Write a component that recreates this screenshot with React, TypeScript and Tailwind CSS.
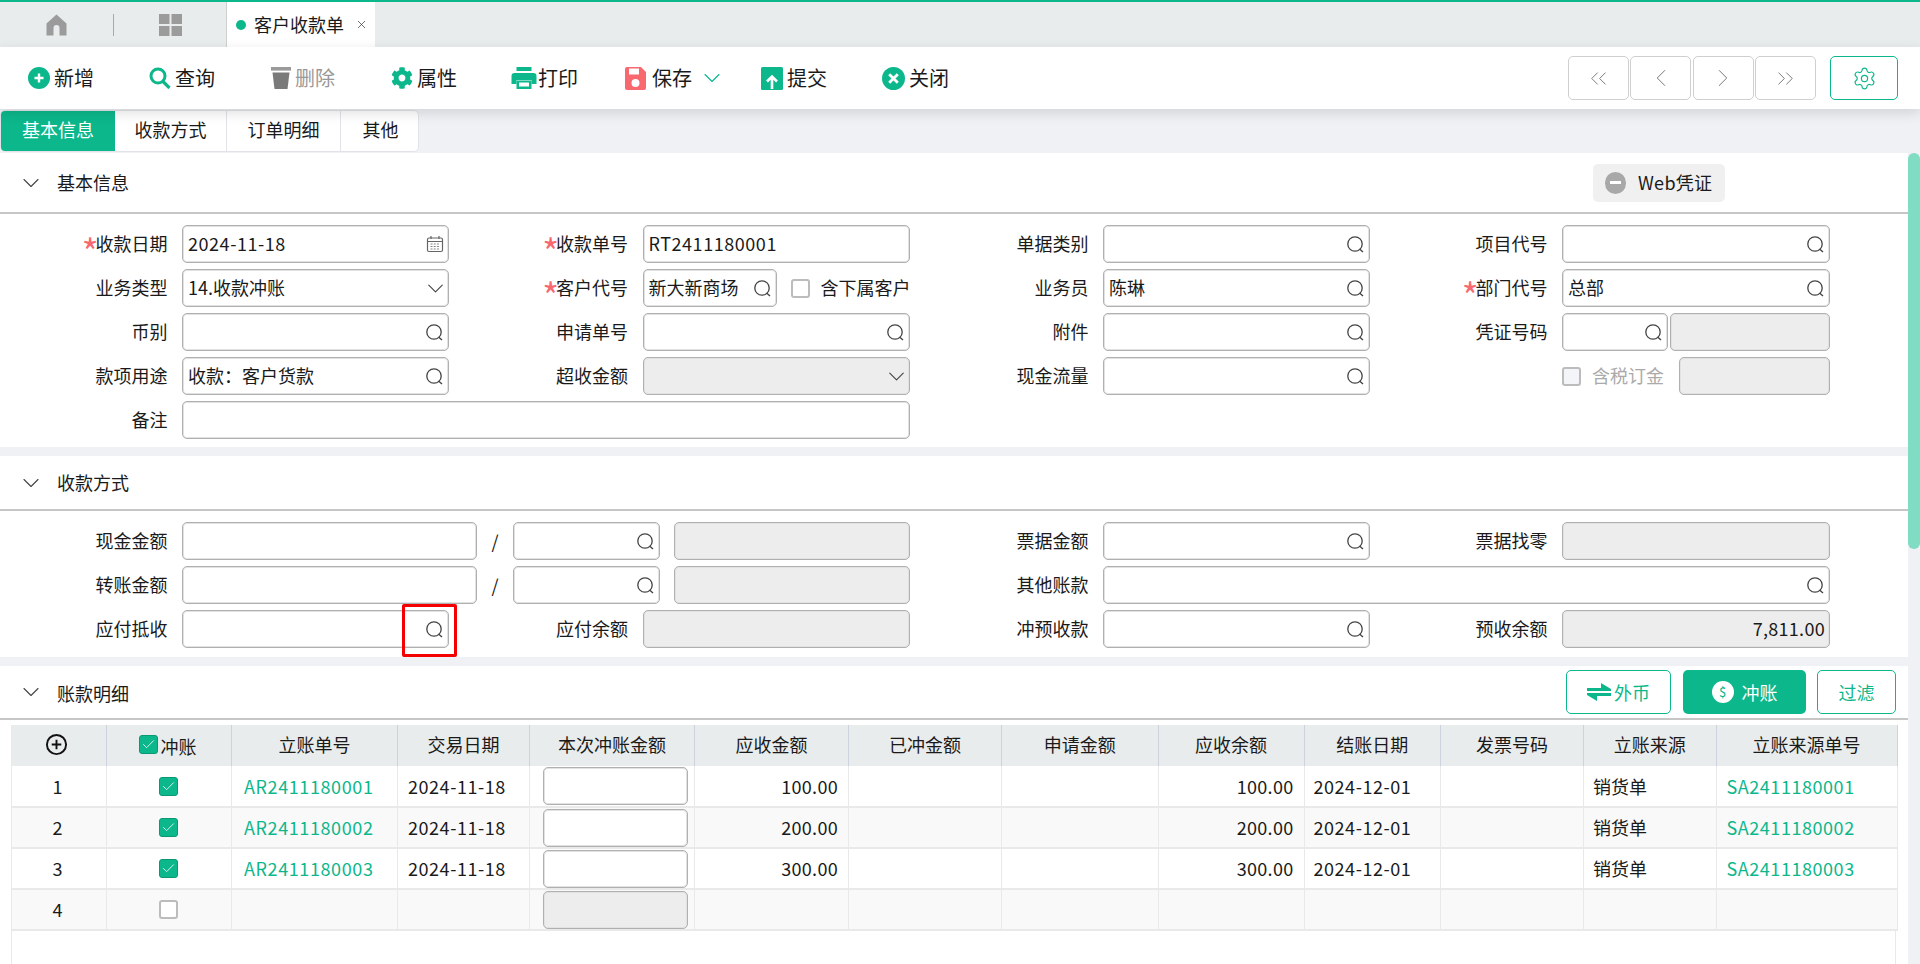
import React from "react";
import { ChevronDown, ChevronLeft, ChevronRight, ChevronsLeft, ChevronsRight, Settings, Check, X } from "lucide-react";
import { FaCog } from "react-icons/fa";

const G = "#0cb78b";

function Q() {
  return (
    <svg width="19" height="19" viewBox="0 0 19 19" fill="none" className="shrink-0">
      <circle cx="9" cy="9" r="7.2" stroke="#444" strokeWidth="1.3" />
      <path d="M13.5 14 L17 17" stroke="#444" strokeWidth="1.4" />
    </svg>
  );
}

function Cal() {
  return (
    <svg width="18" height="18" viewBox="0 0 18 18" fill="none" className="shrink-0">
      <rect x="1.5" y="3" width="15" height="13.5" rx="1.5" stroke="#666" strokeWidth="1.2" />
      <path d="M1.5 6.5 H16.5 M5 1 V4 M13 1 V4" stroke="#666" strokeWidth="1.2" />
      <path d="M4.5 9 H13.5 M4.5 11.5 H13.5 M4.5 14 H13.5" stroke="#888" strokeWidth="1" strokeDasharray="2 1.2" />
    </svg>
  );
}

function Label({ children, req }: { children?: React.ReactNode; req?: boolean }) {
  return (
    <div className="flex items-center justify-end h-[38px] pb-[2px] pr-[1px] text-[18px] text-[#1a1a1a] whitespace-nowrap">
      {req && <span className="text-[#f8686f] text-[36px] leading-[0] mt-[14px] -mr-[3px]">*</span>}
      {children}
    </div>
  );
}

function Inp({
  v,
  icon,
  disabled,
  right,
  className,
  children,
}: {
  v?: string;
  icon?: "q" | "cal" | "down";
  disabled?: boolean;
  right?: boolean;
  className?: string;
  children?: React.ReactNode;
}) {
  return (
    <div
      className={`relative flex items-center h-[38px] rounded-[5px] border border-[#b0b0b0] shadow-[inset_0_0_0_1px_#e2e2e2] pl-[5px] pr-[4px] text-[18px] text-[#1a1a1a] ${
        disabled ? "bg-[#ecedec]" : "bg-white"
      } ${className ?? ""}`}
    >
      <span className={`flex-1 pb-[2px] whitespace-nowrap overflow-hidden ${right ? "text-right" : ""}`}>{v}</span>
      {icon === "q" && <Q />}
      {icon === "cal" && <Cal />}
      {icon === "down" && <ChevronDown size={27} strokeWidth={1} color="#444" className="-mr-[5px] -my-[4px] shrink-0" />}
      {children}
    </div>
  );
}

function Box({ on, disabled, className }: { on?: boolean; disabled?: boolean; className?: string }) {
  return on ? (
    <span className={`inline-flex items-center justify-center w-[19px] h-[19px] rounded-[3px] bg-[#0cb78b] border-[1.5px] border-[#099a75] ${className ?? ""}`}>
      <Check size={15} color="#fff" strokeWidth={1.3} />
    </span>
  ) : (
    <span className={`inline-block w-[19px] h-[19px] rounded-[3px] border-[2px] border-[#bcbcbc] ${disabled ? "bg-[#f4f5f9]" : "bg-white"} ${className ?? ""}`} />
  );
}

function SecHead({ title, className, titleClass, children }: { title: string; className: string; titleClass?: string; children?: React.ReactNode }) {
  return (
    <div className={`flex items-center border-b-2 border-[#c6c6c6] ${className}`}>
      <ChevronDown size={28} strokeWidth={0.95} color="#444" className="ml-[17px] shrink-0" />
      <span className={`ml-[12px] text-[18px] text-[#1a1a1a] ${titleClass ?? ""}`}>{title}</span>
      {children}
    </div>
  );
}

function ToolBtn({ icon, label, className, muted }: { icon: React.ReactNode; label: string; className: string; muted?: boolean }) {
  return (
    <div className={`flex items-center shrink-0 ${className}`}>
      {icon}
      <span className={`ml-[4px] text-[20px] ${muted ? "text-[#999]" : "text-[#1a1a1a]"}`}>{label}</span>
    </div>
  );
}

function NavBtn({ children, className }: { children: React.ReactNode; className?: string }) {
  return (
    <div className={`flex items-center justify-center w-[61px] h-[44px] rounded-[5px] border border-[#cfcfcf] bg-white ${className ?? ""}`}>
      {children}
    </div>
  );
}

const rows = [
  { n: "1", c: true, ar: "AR2411180001", d: "2024-11-18", a: "100.00", e: "2024-12-01", sa: "SA2411180001" },
  { n: "2", c: true, ar: "AR2411180002", d: "2024-11-18", a: "200.00", e: "2024-12-01", sa: "SA2411180002" },
  { n: "3", c: true, ar: "AR2411180003", d: "2024-11-18", a: "300.00", e: "2024-12-01", sa: "SA2411180003" },
  { n: "4", c: false, ar: "", d: "", a: "", e: "", sa: "" },
];

const heads = ["立账单号", "交易日期", "本次冲账金额", "应收金额", "已冲金额", "申请金额", "应收余额", "结账日期", "发票号码", "立账来源", "立账来源单号"];

const th = "h-[41px] p-0 pb-[2px] font-normal text-[18px] text-[#1a1a1a] text-center bg-[#e9ecec] border-r border-[#ccd3de]";
const td = "h-[41px] p-0 text-[18px] border-r border-b-2 border-[#e9e9e9]";
const grid8 = "grid grid-cols-[167.5px_267px_166.5px_267.5px_166px_267px_165px_268px] gap-x-[13.5px] gap-y-[6px] pl-[1px]";

export default function App() {
  return (
    <div className="w-[1920px] h-[964px] overflow-hidden flex flex-col bg-[#f0f1f5] [font-family:'Noto_Sans_CJK_SC','Noto_Sans',sans-serif]">
      {/* tab strip */}
      <div className="h-[47px] shrink-0 bg-[#e9ecec] border-t-2 border-[#0cb78b] flex items-stretch">
        <div className="w-[113px] flex items-center pl-[46px]">
          <svg width="21" height="22" viewBox="0 0 21 22">
            <path d="M10.5 0.5 L20.5 9.5 V21.5 H13.5 V14 A3 3 0 0 0 7.5 14 V21.5 H0.5 V9.5 Z" fill="#9b9b9b" />
          </svg>
        </div>
        <div className="w-px h-[22px] self-center bg-[#aaa]" />
        <div className="w-[112px] flex items-center pl-[45px]">
          <svg width="23" height="22" viewBox="0 0 23 22" fill="#9b9b9b">
            <rect width="10.5" height="10" x="0" y="0" />
            <rect width="10.5" height="10" x="12.5" y="0" />
            <rect width="10.5" height="10" x="0" y="12" />
            <rect width="10.5" height="10" x="12.5" y="12" />
          </svg>
        </div>
        <div className="w-[149px] bg-white border-l border-[#cfcfcf] flex items-center pl-[9px]">
          <span className="w-[10px] h-[10px] rounded-full bg-[#0cb78b]" />
          <span className="ml-[8px] text-[18px] text-[#1a1a1a]">客户收款单</span>
          <X size={13} strokeWidth={1.3} color="#333" className="ml-[11px]" />
        </div>
      </div>

      {/* toolbar */}
      <div className="relative z-10 h-[62px] shrink-0 bg-white flex items-center pl-[28px] pr-[22px] shadow-[0_4px_12px_rgba(0,0,0,0.13)]">
        <ToolBtn
          className="w-[121px]"
          label="新增"
          icon={
            <svg width="22" height="22" viewBox="0 0 22 22">
              <circle cx="11" cy="11" r="11" fill={G} />
              <path d="M11 6.5 V15.5 M6.5 11 H15.5" stroke="#fff" strokeWidth="2.4" />
            </svg>
          }
        />
        <ToolBtn
          className="w-[122px]"
          label="查询"
          icon={
            <svg width="22" height="22" viewBox="0 0 22 22" fill="none">
              <circle cx="9" cy="9" r="7" stroke={G} strokeWidth="3" />
              <path d="M13.5 14 L20.5 21" stroke={G} strokeWidth="3.2" />
            </svg>
          }
        />
        <ToolBtn
          className="w-[120px]"
          label="删除"
          muted
          icon={
            <svg width="20" height="22" viewBox="0 0 20 22" fill="#7a7a7a">
              <rect x="0" y="0" width="20" height="3.6" fill="#9a9a9a" />
              <path d="M1.5 5.5 H18.5 L16.5 22 H3.5 Z" />
            </svg>
          }
        />
        <ToolBtn className="w-[120px]" label="属性" icon={<FaCog size={22} color={G} />} />
        <div className="w-[114px] flex items-center shrink-0">
          <svg width="26" height="22" viewBox="0 0 25 22" fill={G}>
            <rect x="5" y="0" width="15" height="4" />
            <path d="M3 6 H22 A3 3 0 0 1 25 9 V17 H20 V13 H5 V17 H0 V9 A3 3 0 0 1 3 6 Z" />
            <path d="M5 13.5 H20 V22 H5 Z M7.5 15.5 V19.5 H17.5 V15.5 Z" fillRule="evenodd" />
          </svg>
          <span className="ml-[1px] text-[20px] text-[#1a1a1a]">打印</span>
        </div>
        <div className="w-[136px] flex items-center shrink-0">
          <svg width="21" height="23" viewBox="0 0 21 23" fill="#f8686f">
            <path fillRule="evenodd" d="M2 0 H16 L21 5 V21 A2 2 0 0 1 19 23 H2 A2 2 0 0 1 0 21 V2 A2 2 0 0 1 2 0 Z M4 1.5 V7.5 H14 V1.5 Z M10.5 12 A4 4 0 1 0 10.5 20 A4 4 0 1 0 10.5 12 Z" />
          </svg>
          <span className="ml-[6px] text-[20px] text-[#1a1a1a]">保存</span>
          <ChevronDown size={28} strokeWidth={0.95} color={G} className="ml-[6px] -my-[4px] shrink-0" />
        </div>
        <ToolBtn
          className="w-[121px]"
          label="提交"
          icon={
            <svg width="22" height="23" viewBox="0 0 22 23">
              <rect width="22" height="23" rx="1.5" fill={G} />
              <path d="M11 22 V11 M6 14.5 L11 9.5 L16 14.5" stroke="#fff" strokeWidth="2.6" fill="none" />
            </svg>
          }
        />
        <ToolBtn
          className="w-[121px]"
          label="关闭"
          icon={
            <svg width="23" height="23" viewBox="0 0 23 23">
              <circle cx="11.5" cy="11.5" r="11.5" fill={G} />
              <path d="M7.2 7.2 L15.8 15.8 M15.8 7.2 L7.2 15.8" stroke="#fff" strokeWidth="2.8" />
            </svg>
          }
        />
        <div className="ml-auto flex items-center">
          <NavBtn><ChevronsLeft size={27} strokeWidth={0.85} color="#777" /></NavBtn>
          <NavBtn className="ml-[1.5px]"><ChevronLeft size={30} strokeWidth={0.8} color="#777" /></NavBtn>
          <NavBtn className="ml-[1.5px]"><ChevronRight size={30} strokeWidth={0.8} color="#777" /></NavBtn>
          <NavBtn className="ml-[1.5px]"><ChevronsRight size={27} strokeWidth={0.85} color="#777" /></NavBtn>
          <div className="ml-[14px] w-[68px] h-[44px] rounded-[5px] border border-[#0cb78b] flex items-center justify-center">
            <Settings size={25} strokeWidth={1.1} color={G} />
          </div>
        </div>
      </div>

      {/* page tabs */}
      <div className="h-[44px] shrink-0 pt-[1px]">
        <div className="flex w-[419px] h-[42px] rounded-[5px] bg-white border border-[#e2e3e8] text-[18px] text-[#1a1a1a] overflow-hidden">
          <div className="w-[114px] pb-[3px] flex items-center justify-center bg-[#0cb78b] text-white">基本信息</div>
          <div className="w-[112px] pb-[3px] flex items-center justify-center border-r border-[#e2e3e8]">收款方式</div>
          <div className="w-[114px] pb-[3px] flex items-center justify-center border-r border-[#e2e3e8]">订单明细</div>
          <div className="flex-1 pb-[3px] pl-[2px] flex items-center justify-center">其他</div>
        </div>
      </div>

      {/* scrolling body */}
      <div className="flex flex-1 min-h-0">
        <div className="w-[1908px] flex flex-col">
          {/* section 1 */}
          <div className="bg-white">
            <SecHead title="基本信息" className="h-[61px]">
              <div className="ml-auto mr-[183px] w-[132px] h-[38px] rounded-[5px] bg-[#f0f0f0] flex items-center pl-[12px]">
                <span className="w-[21px] h-[22px] rounded-full bg-[#a8a8a8] flex items-center justify-center">
                  <span className="w-[11px] h-[3px] bg-white" />
                </span>
                <span className="ml-[12px] text-[18px] tracking-[0.3px] text-[#1a1a1a]">Web凭证</span>
              </div>
            </SecHead>
            <div className={`${grid8} pt-[11px] pb-[8px]`}>
              <Label req>收款日期</Label>
              <Inp v="2024-11-18" icon="cal" className="tracking-[0.55px]" />
              <Label req>收款单号</Label>
              <Inp v="RT2411180001" className="tracking-[0.55px]" />
              <Label>单据类别</Label>
              <Inp icon="q" />
              <Label>项目代号</Label>
              <Inp icon="q" />

              <Label>业务类型</Label>
              <Inp v="14.收款冲账" icon="down" />
              <Label req>客户代号</Label>
              <div className="flex items-center">
                <Inp v="新大新商场" icon="q" className="w-[134px] shrink-0" />
                <Box className="ml-[14px] shrink-0" />
                <span className="ml-[11px] pb-[2px] text-[18px] text-[#1a1a1a] whitespace-nowrap">含下属客户</span>
              </div>
              <Label>业务员</Label>
              <Inp v="陈琳" icon="q" />
              <Label req>部门代号</Label>
              <Inp v="总部" icon="q" />

              <Label>币别</Label>
              <Inp icon="q" />
              <Label>申请单号</Label>
              <Inp icon="q" />
              <Label>附件</Label>
              <Inp icon="q" />
              <Label>凭证号码</Label>
              <div className="flex items-center gap-[1.5px]">
                <Inp icon="q" className="w-[106px] shrink-0" />
                <Inp disabled className="flex-1" />
              </div>

              <Label>款项用途</Label>
              <Inp v="收款：客户货款" icon="q" />
              <Label>超收金额</Label>
              <Inp disabled icon="down" />
              <Label>现金流量</Label>
              <Inp icon="q" />
              <Label />
              <div className="flex items-center">
                <Box disabled className="shrink-0" />
                <span className="ml-[11px] pb-[2px] text-[18px] text-[#aaa] whitespace-nowrap">含税订金</span>
                <Inp disabled className="ml-auto w-[151px]" />
              </div>

              <Label>备注</Label>
              <Inp className="col-span-3" />
            </div>
          </div>

          {/* section 2 */}
          <div className="bg-white mt-[9px]">
            <SecHead title="收款方式" className="h-[55px]" />
            <div className={`${grid8} pt-[11px] pb-[9px]`}>
              <Label>现金金额</Label>
              <div className="col-span-3 flex items-center">
                <Inp className="w-[295px] shrink-0" />
                <span className="w-[36px] text-center text-[18px] text-[#1a1a1a]">/</span>
                <Inp icon="q" className="w-[147px] shrink-0" />
                <Inp disabled className="ml-[14px] w-[236px] shrink-0" />
              </div>
              <Label>票据金额</Label>
              <Inp icon="q" />
              <Label>票据找零</Label>
              <Inp disabled />

              <Label>转账金额</Label>
              <div className="col-span-3 flex items-center">
                <Inp className="w-[295px] shrink-0" />
                <span className="w-[36px] text-center text-[18px] text-[#1a1a1a]">/</span>
                <Inp icon="q" className="w-[147px] shrink-0" />
                <Inp disabled className="ml-[14px] w-[236px] shrink-0" />
              </div>
              <Label>其他账款</Label>
              <Inp icon="q" className="col-span-3" />

              <Label>应付抵收</Label>
              <Inp icon="q">
                <span className="absolute -right-[9px] -top-[7px] -bottom-[10px] w-[55px] rounded-[2px] border-[3px] border-[#f40000]" />
              </Inp>
              <Label>应付余额</Label>
              <Inp disabled />
              <Label>冲预收款</Label>
              <Inp icon="q" />
              <Label>预收余额</Label>
              <Inp disabled v="7,811.00" right className="tracking-[0.3px]" />
            </div>
          </div>

          {/* section 3 */}
          <div className="bg-white mt-[9px] flex-1 flex flex-col min-h-0">
            <SecHead title="账款明细" className="h-[54px] shrink-0" titleClass="mt-[3px]">
              <div className="ml-auto mr-[12px] flex items-center text-[18px]">
                <div className="w-[105px] h-[44px] rounded-[5px] border border-[#0cb78b] flex items-center justify-center text-[#0cb78b]">
                  <svg width="24" height="22" viewBox="0 0 24 22" fill={G}>
                    <path d="M0 7 H14 V2 L24 8 V10 H0 Z" />
                    <path d="M24 12 H0 V14 L10 20 V15 H24 Z" />
                  </svg>
                  <span className="ml-[3px]">外币</span>
                </div>
                <div className="ml-[12px] w-[123px] h-[44px] rounded-[5px] bg-[#0cb78b] flex items-center justify-center text-white">
                  <span className="w-[22px] h-[22px] rounded-full bg-white flex items-center justify-center text-[13px] text-[#0cb78b]">$</span>
                  <span className="ml-[8px]">冲账</span>
                </div>
                <div className="ml-[11px] w-[79px] h-[44px] rounded-[5px] border border-[#0cb78b] flex items-center justify-center text-[#0cb78b]">过滤</div>
              </div>
            </SecHead>
            <div className="ml-[11px] mr-[12px] mt-[5px] flex-1 border-x border-[#e9e9e9]">
              <table className="table-fixed border-collapse w-[1885px]">
                <colgroup>
                  <col className="w-[94.5px]" />
                  <col className="w-[125px]" />
                  <col className="w-[166px]" />
                  <col className="w-[132px]" />
                  <col className="w-[165px]" />
                  <col className="w-[154px]" />
                  <col className="w-[153px]" />
                  <col className="w-[156.5px]" />
                  <col className="w-[146px]" />
                  <col className="w-[136.5px]" />
                  <col className="w-[143px]" />
                  <col className="w-[132.5px]" />
                  <col className="w-[181px]" />
                </colgroup>
                <thead>
                  <tr>
                    <th className={`${th} pr-[6px]`}>
                      <svg width="23" height="23" viewBox="0 0 24 24" fill="none" className="mx-auto">
                        <circle cx="12" cy="12" r="10" stroke="#111" strokeWidth="2" />
                        <path d="M12 7 V17 M7 12 H17" stroke="#111" strokeWidth="2" />
                      </svg>
                    </th>
                    <th className={`${th} pr-[3px]`}>
                      <div className="flex items-center justify-center">
                        <Box on />
                        <span className="ml-[3px] mt-[3px]">冲账</span>
                      </div>
                    </th>
                    {heads.map((h) => (
                      <th key={h} className={th}>{h}</th>
                    ))}
                  </tr>
                </thead>
                <tbody>
                  {rows.map((r, i) => (
                    <tr key={r.n} className={i % 2 ? "bg-[#f9f9f9]" : "bg-white"}>
                      <td className={`${td} text-center text-[#1a1a1a] pr-[3px]`}>{r.n}</td>
                      <td className={td}>
                        <div className="flex justify-center pr-[1px]"><Box on={r.c} /></div>
                      </td>
                      <td className={`${td} pl-[12px] tracking-[0.6px] text-[#0cb78b]`}>{r.ar}</td>
                      <td className={`${td} pl-[10px] tracking-[0.55px] text-[#1a1a1a]`}>{r.d}</td>
                      <td className={td}>
                        <Inp disabled={!r.c} className="ml-[13px] w-[145px]" />
                      </td>
                      <td className={`${td} text-right pr-[10px] tracking-[0.3px] text-[#1a1a1a]`}>{r.a}</td>
                      <td className={td} />
                      <td className={td} />
                      <td className={`${td} text-right pr-[10px] tracking-[0.3px] text-[#1a1a1a]`}>{r.a}</td>
                      <td className={`${td} pl-[9px] tracking-[0.55px] text-[#1a1a1a]`}>{r.e}</td>
                      <td className={td} />
                      <td className={`${td} pl-[9px] text-[#1a1a1a]`}>{r.c ? "销货单" : ""}</td>
                      <td className={`${td} pl-[10px] tracking-[0.55px] text-[#0cb78b]`}>{r.sa}</td>
                    </tr>
                  ))}
                </tbody>
              </table>
            </div>
          </div>
        </div>
        <div className="w-[12px] pt-0">
          <div className="h-[396px] rounded-[6px] bg-[#80dcc2]" />
        </div>
      </div>
    </div>
  );
}
